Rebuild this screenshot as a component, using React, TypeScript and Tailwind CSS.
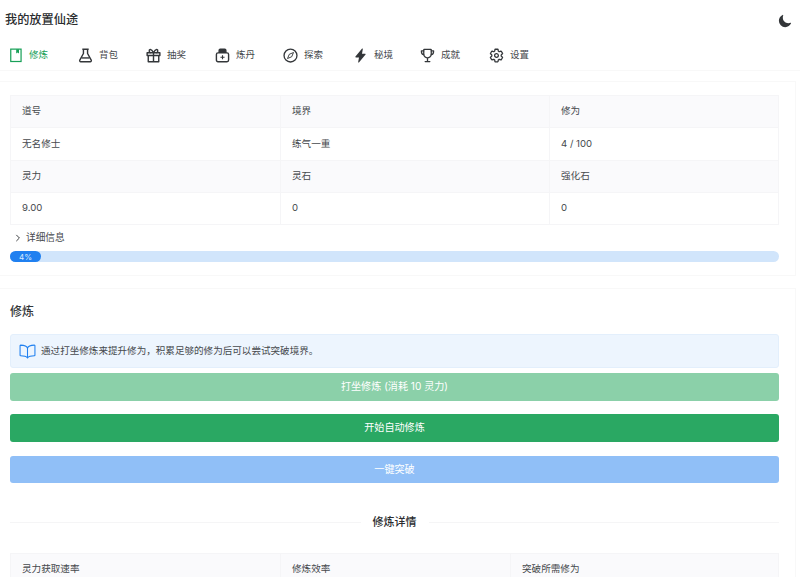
import React from 'react';
import {
  IoBookOutline,
  IoChevronForward,
  IoFlash,
  IoMoon,
  IoSettingsOutline,
  IoTrophyOutline,
} from 'react-icons/io5';

const font = "font-['Inter','Noto_Sans_CJK_SC',sans-serif]";

function BookmarkIcon({ className }: { className?: string }) {
  return (
    <svg viewBox="0 0 16 16" fill="none" stroke="currentColor" strokeWidth="1.3" className={className}>
      <rect x="0.8" y="1.2" width="11" height="13.2" />
      <path d="M6.6 1.2v4.6l1.5-1.1 1.5 1.1V1.2" fill="currentColor" stroke="none" />
    </svg>
  );
}

function FlaskIcon({ className }: { className?: string }) {
  return (
    <svg viewBox="0 0 16 16" fill="none" stroke="currentColor" strokeWidth="1.5" strokeLinejoin="round" className={className}>
      <path d="M4.6 1.3h6.8M5.8 1.3v4.6L1.9 13c-.4.8.1 1.7 1 1.7h10.2c.9 0 1.4-.9 1-1.7l-3.9-7.1V1.3" />
      <path d="M3.8 10.6h8.4" />
    </svg>
  );
}

function GiftIcon({ className }: { className?: string }) {
  return (
    <svg viewBox="0 0 16 16" fill="none" stroke="currentColor" strokeWidth="1.5" strokeLinejoin="round" className={className}>
      <path d="M1.2 5h13.6v3H1.2zM2.4 8v6.6h11.2V8M8 5v9.6" />
      <path d="M8 5C6.8 2.6 5.6 1.4 4.5 1.6c-1.6.3-1.5 3.4.6 3.4M8 5c1.2-2.4 2.4-3.6 3.5-3.4 1.6.3 1.5 3.4-.6 3.4" />
    </svg>
  );
}

function MedkitIcon({ className }: { className?: string }) {
  return (
    <svg viewBox="0 0 16 16" fill="none" stroke="currentColor" strokeWidth="1.5" strokeLinejoin="round" className={className}>
      <path d="M3.2 5.2h9.6c1 0 1.7.7 1.7 1.7v6c0 1-.7 1.7-1.7 1.7H3.2c-1 0-1.7-.7-1.7-1.7v-6c0-1 .7-1.7 1.7-1.7z" />
      <path d="M4.4 5.2V2.6c0-.7.5-1.2 1.2-1.2h4.8c.7 0 1.2.5 1.2 1.2v2.6" fill="currentColor" />
      <path d="M8 7.6v4.4M5.8 9.8h4.4" strokeWidth="1.2" />
    </svg>
  );
}

function CompassIcon({ className }: { className?: string }) {
  return (
    <svg viewBox="0 0 16 16" fill="none" stroke="currentColor" strokeWidth="1.4" strokeLinejoin="round" className={className}>
      <circle cx="8" cy="8" r="6.9" />
      <path d="M11.2 4.8 9.3 9.3 4.8 11.2 6.7 6.7z" strokeWidth="1" />
    </svg>
  );
}

const thick = '[&_*]:[stroke-width:44px]';

const tabs = [
  { label: '修炼', icon: BookmarkIcon, width: 'w-[68px]', gap: 'gap-[4px]', active: true },
  { label: '背包', icon: FlaskIcon, width: 'w-[68px]', gap: 'gap-[6px]' },
  { label: '抽奖', icon: GiftIcon, width: 'w-[69px]', gap: 'gap-[6px]' },
  { label: '炼丹', icon: MedkitIcon, width: 'w-[68px]', gap: 'gap-[6px]' },
  { label: '探索', icon: CompassIcon, width: 'w-[70px]', gap: 'gap-[6px]' },
  { label: '秘境', icon: IoFlash, width: 'w-[67px]', gap: 'gap-[6px]' },
  { label: '成就', icon: IoTrophyOutline, width: 'w-[69px]', gap: 'gap-[6px]', extra: thick },
  { label: '设置', icon: IoSettingsOutline, width: 'w-[68px]', gap: 'gap-[6px]', extra: thick },
];

function Cell({ text, head, right }: { text: string; head?: boolean; right?: boolean }) {
  return (
    <div
      className={`flex items-center px-[11px] text-[9.6px] text-[#46494d] border-b border-[#f5f5f7] ${
        right ? '' : 'border-r'
      } ${head ? 'bg-[#fafafc]' : 'bg-white'}`}
    >
      {text}
    </div>
  );
}

export default function App() {
  return (
    <div className={`${font} h-[577px] w-[800px] overflow-hidden bg-white text-[#46494d]`}>
      <header className="h-[71px] border-b border-[#f8f8f8] px-[5px]">
        <div className="flex h-[41px] items-center justify-between pr-[3px]">
          <h1 className="text-[12.2px] font-medium text-[#2a2c2e]">我的放置仙途</h1>
          <IoMoon className="h-[14px] w-[14px] text-[#333639]" />
        </div>
        <nav className="flex h-[29px] items-center pl-[5px]">
          {tabs.map((tab) => {
            const Icon = tab.icon;
            return (
              <div
                key={tab.label}
                className={`flex items-center text-[9.5px] ${tab.gap} ${tab.width} ${
                  tab.active ? 'text-[#18a058]' : 'text-[#46494d]'
                }`}
              >
                <Icon className={`h-[15px] w-[15px] ${tab.active ? 'text-[#18a058]' : 'text-[#333639]'} ${tab.extra ?? ''}`} />
                <span>{tab.label}</span>
              </div>
            );
          })}
        </nav>
      </header>

      <main className="w-[796px] pt-[10px]">
        <section className="h-[195px] border border-l-0 border-[#f8f8f8] px-[10px] pt-[13px]">
          <div className="grid h-[130px] w-[769px] grid-cols-[270px_269px_228px] grid-rows-[32px_33px_32px_32px] border-l border-t border-r border-[#f5f5f7]">
            <Cell text="道号" head />
            <Cell text="境界" head />
            <Cell text="修为" head right />
            <Cell text="无名修士" />
            <Cell text="练气一重" />
            <Cell text="4 / 100" right />
            <Cell text="灵力" head />
            <Cell text="灵石" head />
            <Cell text="强化石" head right />
            <Cell text="9.00" />
            <Cell text="0" />
            <Cell text="0" right />
          </div>
          <div className="flex h-[26px] items-center gap-[3px] pl-[3px] text-[9.7px]">
            <IoChevronForward className="h-[10px] w-[10px] text-[#333639]" />
            <span>详细信息</span>
          </div>
          <div className="h-[11px] w-[769px] rounded-full bg-[#d1e5fb]">
            <div className="flex h-full w-[31px] items-center justify-center rounded-full bg-[#2080f0] text-[8px] text-[#dbeafe]">
              4%
            </div>
          </div>
        </section>

        <section className="mt-[12px] border border-l-0 border-[#f8f8f8] px-[10px] pt-[14px]">
          <h2 className="flex h-[18px] items-center text-[12px] font-medium text-[#333639]">修炼</h2>
          <div className="mt-[13px] flex h-[34px] w-[769px] items-center gap-[5px] rounded-[3px] border border-[#e3effc] bg-[#edf5fe] pl-[8px] text-[9.57px]">
            <IoBookOutline className="h-[17px] w-[17px] text-[#2080f0]" />
            <span>通过打坐修炼来提升修为，积累足够的修为后可以尝试突破境界。</span>
          </div>
          <div className="mt-[5px] flex w-[769px] flex-col text-[10.1px] text-white">
            <button className="h-[28px] rounded-[3px] bg-[#8bd0a9]">打坐修炼 (消耗 10 灵力)</button>
            <button className="mt-[13px] h-[28px] rounded-[3px] bg-[#2aa863]">开始自动修炼</button>
            <button className="mt-[14px] h-[27px] rounded-[3px] bg-[#90bff7]">一键突破</button>
          </div>
          <div className="mt-[30px] flex h-[18px] w-[769px] items-center gap-[12px]">
            <div className="h-px flex-1 bg-[#f5f5f6]" />
            <span className="text-[11px] font-medium text-[#2a2c2e]">修炼详情</span>
            <div className="h-px flex-1 bg-[#f5f5f6]" />
          </div>
          <div className="mt-[22px] grid h-[32px] w-[769px] grid-cols-[270px_230px_267px] border-l border-t border-r border-[#f5f5f7]">
            <Cell text="灵力获取速率" head />
            <Cell text="修炼效率" head />
            <Cell text="突破所需修为" head right />
          </div>
        </section>
      </main>
    </div>
  );
}
